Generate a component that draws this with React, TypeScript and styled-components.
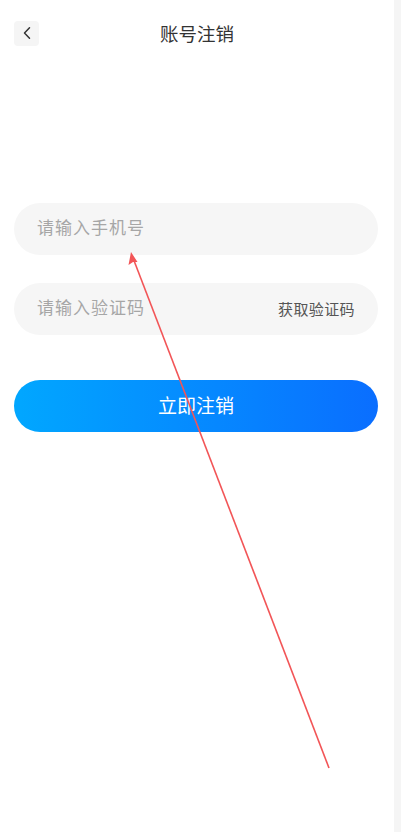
import React from 'react';
import styled, { createGlobalStyle } from 'styled-components';

const GlobalStyle = createGlobalStyle`
  html, body {
    margin: 0;
    padding: 0;
    background: #fff;
    font-family: "Noto Sans CJK SC", "Noto Sans", sans-serif;
  }
`;

const Screen = styled.div`
  position: relative;
  width: 401px;
  height: 832px;
  display: flex;
  overflow: hidden;
`;

const Page = styled.div`
  width: 394px;
  display: flex;
  flex-direction: column;
  background: #fff;
`;

const Scrollbar = styled.div`
  width: 7px;
  background: #f5f5f5;
`;

const Header = styled.div`
  height: 66px;
  display: flex;
  align-items: center;
  position: relative;
  padding: 0 14px;
`;

const BackBtn = styled.div`
  width: 25px;
  height: 25px;
  border-radius: 4px;
  background: #f5f5f5;
  display: flex;
  align-items: center;
  justify-content: center;
`;

const Title = styled.div`
  position: absolute;
  left: 0;
  right: 0;
  text-align: center;
  font-size: 18.5px;
  line-height: 1;
  color: #333;
  pointer-events: none;
`;

const Form = styled.div`
  display: flex;
  flex-direction: column;
  padding: 137px 16px 0 14px;
`;

const Field = styled.div<{ gap?: number }>`
  box-sizing: border-box;
  height: 52px;
  border-radius: 26px;
  background: #f6f6f6;
  display: flex;
  align-items: center;
  justify-content: space-between;
  padding: 0 23px 5px 23px;
  line-height: 1;
  margin-bottom: ${(p) => p.gap ?? 28}px;
`;

const Placeholder = styled.span`
  font-size: 17px;
  letter-spacing: 1px;
  color: #a6a6a6;
`;

const CodeLink = styled.span`
  font-size: 15px;
  letter-spacing: 0.4px;
  color: #555;
  margin-top: 4px;
`;

const SubmitBtn = styled.div`
  box-sizing: border-box;
  height: 52px;
  border-radius: 26px;
  background: linear-gradient(90deg, #01a7ff 0%, #0a6eff 100%);
  color: #fff;
  font-size: 19px;
  line-height: 1;
  padding-bottom: 4px;
  display: flex;
  align-items: center;
  justify-content: center;
`;

const Annotation = styled.svg`
  position: absolute;
  left: 0;
  top: 0;
  pointer-events: none;
`;

export default function App() {
  return (
    <>
      <GlobalStyle />
      <Screen>
        <Page>
          <Header>
            <BackBtn>
              <svg width="14" height="14" viewBox="0 0 14 14">
                <path d="M9.5 1.8 L4.5 7 L9.5 12.2" fill="none" stroke="#333" strokeWidth="1.5" strokeLinecap="round" strokeLinejoin="round" />
              </svg>
            </BackBtn>
            <Title>账号注销</Title>
          </Header>
          <Form>
            <Field>
              <Placeholder>请输入手机号</Placeholder>
            </Field>
            <Field gap={45}>
              <Placeholder>请输入验证码</Placeholder>
              <CodeLink>获取验证码</CodeLink>
            </Field>
            <SubmitBtn>立即注销</SubmitBtn>
          </Form>
        </Page>
        <Scrollbar />
        <Annotation width="401" height="832">
          <line x1="329" y1="768" x2="133" y2="258" stroke="#f25557" strokeWidth="1.6" />
          <path d="M131 252 L128.5 265 L133 262 L137.5 262 Z" fill="#f25557" />
        </Annotation>
      </Screen>
    </>
  );
}
